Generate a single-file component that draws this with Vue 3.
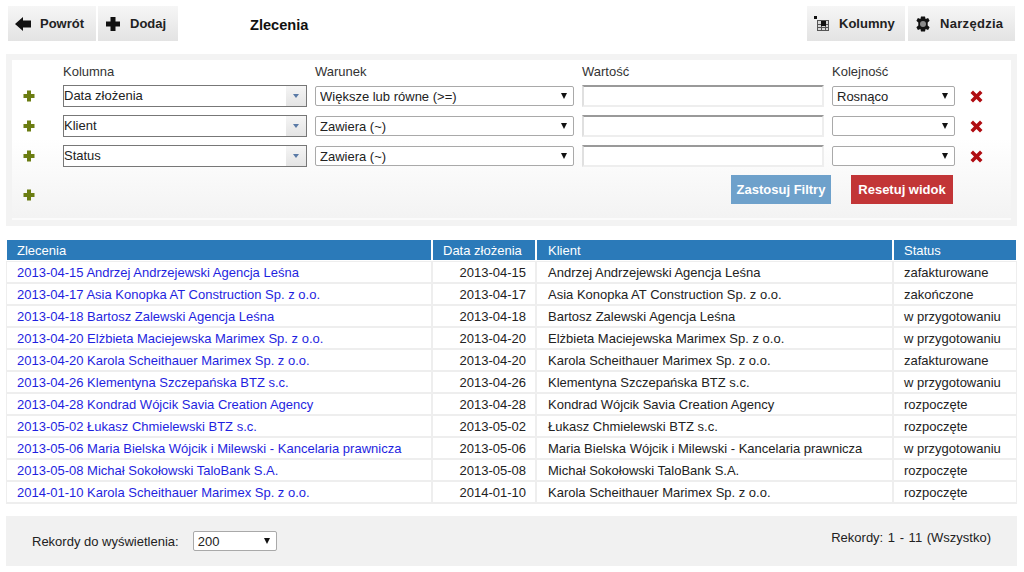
<template>
    <div class="page">
        <div class="toolbar">
            <button class="tool-btn btn-back">
                <svg width="16" height="16" viewBox="0 0 16 16"><path d="M0 8 L8 1 V4.5 H16 V11.5 H8 V15 Z" fill="#111" /></svg>
                <span>Powrót</span>
            </button>
            <button class="tool-btn btn-add">
                <svg width="16" height="16" viewBox="0 0 16 16"><path d="M5.5 1 H10.5 V5.5 H15 V10.5 H10.5 V15 H5.5 V10.5 H1 V5.5 H5.5 Z" fill="#111" /></svg>
                <span>Dodaj</span>
            </button>
            <h1 class="title">Zlecenia</h1>
            <div class="toolbar-right">
                <button class="tool-btn btn-cols">
                    <svg width="16" height="16" viewBox="0 0 16 16">
                        <rect x="3" y="4" width="12" height="11" fill="#d8d8d8" />
                        <path d="M3 4.5 H15 M3 8.5 H15 M3 11.5 H15 M3 14.5 H15 M3.5 4 V15 M7.5 4 V15 M11.5 4 V15 M14.5 4 V15" stroke="#555" stroke-width="1" fill="none" />
                        <rect x="0" y="0" width="3" height="3" fill="#111" />
                        <rect x="7" y="5" width="5" height="5" fill="#111" />
                    </svg>
                    <span>Kolumny</span>
                </button>
                <button class="tool-btn btn-tools">
                    <svg width="16" height="16" viewBox="0 0 16 16">
                        <path d="M6 0.5 H10 L10.6 3 L13.1 1.9 L14.6 4.8 L12.7 6.4 V9.6 L14.6 11.2 L13.1 14.1 L10.6 13 L10 15.5 H6 L5.4 13 L2.9 14.1 L1.4 11.2 L3.3 9.6 V6.4 L1.4 4.8 L2.9 1.9 L5.4 3 Z" fill="#111" />
                        <circle cx="8" cy="8" r="3" fill="#8a8a8a" />
                    </svg>
                    <span>Narzędzia</span>
                </button>
            </div>
        </div>

        <div class="filter-panel">
            <div class="filter-inner">
                <div class="filter-grid labels">
                    <span></span>
                    <label>Kolumna</label>
                    <label>Warunek</label>
                    <label>Wartość</label>
                    <label>Kolejność</label>
                    <span></span>
                </div>
                <div v-for="row in filters" :key="row.column" class="filter-grid filter-row">
                    <svg class="plus" width="12" height="12" viewBox="0 0 12 12"><path :d="plusPath" fill="#6b7d12" /></svg>
                    <div class="combo">
                        <input class="combo-input" :value="row.column" />
                        <span class="combo-btn"><i></i></span>
                    </div>
                    <div class="select-wrap cond">
                        <select>
                            <option>{{ row.condition }}</option>
                        </select>
                    </div>
                    <input class="value-input" />
                    <div class="select-wrap order">
                        <select>
                            <option>{{ row.order }}</option>
                        </select>
                    </div>
                    <svg class="remove" width="13" height="13" viewBox="0 0 13 13"><path d="M3 0.5 L6.5 4 L10 0.5 L12.5 3 L9 6.5 L12.5 10 L10 12.5 L6.5 9 L3 12.5 L0.5 10 L4 6.5 L0.5 3 Z" fill="#b00d12" /></svg>
                </div>
                <div class="filter-actions">
                    <svg class="plus" width="12" height="12" viewBox="0 0 12 12"><path :d="plusPath" fill="#6b7d12" /></svg>
                    <button class="btn-apply">Zastosuj Filtry</button>
                    <button class="btn-reset">Resetuj widok</button>
                </div>
            </div>
        </div>

        <table class="orders">
            <colgroup>
                <col style="width: 427px" />
                <col style="width: 104px" />
                <col style="width: 357px" />
                <col style="width: 123px" />
            </colgroup>
            <thead>
                <tr>
                    <th>Zlecenia</th>
                    <th>Data złożenia</th>
                    <th>Klient</th>
                    <th>Status</th>
                </tr>
            </thead>
            <tbody>
                <tr v-for="o in orders" :key="o.date + o.client">
                    <td><a href="#">{{ o.date }} {{ o.client }}</a></td>
                    <td class="date">{{ o.date }}</td>
                    <td>{{ o.client }}</td>
                    <td>{{ o.status }}</td>
                </tr>
            </tbody>
        </table>

        <div class="pager">
            <div class="pager-left">
                <span>Rekordy do wyświetlenia:</span>
                <div class="select-wrap size">
                    <select>
                        <option>200</option>
                    </select>
                </div>
            </div>
            <div class="pager-right">Rekordy: 1 - 11 (Wszystko)</div>
        </div>
    </div>
</template>

<script setup>
const plusPath = 'M4 0.5 H8 V4 H11.5 V8 H8 V11.5 H4 V8 H0.5 V4 H4 Z';

const filters = [
    { column: 'Data złożenia', condition: 'Większe lub równe (>=)', order: 'Rosnąco' },
    { column: 'Klient', condition: 'Zawiera (~)', order: '' },
    { column: 'Status', condition: 'Zawiera (~)', order: '' }
];

const orders = [
    { date: '2013-04-15', client: 'Andrzej Andrzejewski Agencja Leśna', status: 'zafakturowane' },
    { date: '2013-04-17', client: 'Asia Konopka AT Construction Sp. z o.o.', status: 'zakończone' },
    { date: '2013-04-18', client: 'Bartosz Zalewski Agencja Leśna', status: 'w przygotowaniu' },
    { date: '2013-04-20', client: 'Elżbieta Maciejewska Marimex Sp. z o.o.', status: 'w przygotowaniu' },
    { date: '2013-04-20', client: 'Karola Scheithauer Marimex Sp. z o.o.', status: 'zafakturowane' },
    { date: '2013-04-26', client: 'Klementyna Szczepańska BTZ s.c.', status: 'w przygotowaniu' },
    { date: '2013-04-28', client: 'Kondrad Wójcik Savia Creation Agency', status: 'rozpoczęte' },
    { date: '2013-05-02', client: 'Łukasz Chmielewski BTZ s.c.', status: 'rozpoczęte' },
    { date: '2013-05-06', client: 'Maria Bielska Wójcik i Milewski - Kancelaria prawnicza', status: 'w przygotowaniu' },
    { date: '2013-05-08', client: 'Michał Sokołowski TaloBank S.A.', status: 'rozpoczęte' },
    { date: '2014-01-10', client: 'Karola Scheithauer Marimex Sp. z o.o.', status: 'rozpoczęte' }
];
</script>

<style scoped>
.page {
    width: 1024px;
    height: 572px;
    overflow: hidden;
    background: #fff;
    font-family: "Liberation Sans", Arial, sans-serif;
    font-size: 13px;
    color: #222;
    box-sizing: border-box;
    padding-top: 6px;
}

.toolbar {
    display: flex;
    align-items: center;
    height: 35px;
    padding: 0 9px 0 8px;
}

.tool-btn {
    display: flex;
    align-items: center;
    height: 35px;
    border: none;
    padding: 0 0 0 7px;
    background: linear-gradient(#f6f6f6, #e3e3e3);
    font-family: inherit;
    font-size: 13px;
    font-weight: bold;
    color: #222;
    box-sizing: border-box;
}

.btn-back { width: 88px; gap: 9px; margin-right: 2px; }
.btn-add { width: 80px; gap: 9px; }
.btn-cols { width: 98px; gap: 9px; margin-right: 3px; }
.btn-tools { width: 107px; gap: 9px; letter-spacing: 0.3px; }

.title {
    margin: 2px 0 0 72px;
    font-size: 14.6px;
    font-weight: bold;
    color: #111;
}

.toolbar-right {
    margin-left: auto;
    display: flex;
}

.filter-panel {
    margin: 13px 7px 0 6px;
    height: 172px;
    box-sizing: border-box;
    background: #f3f3f3;
    padding: 6px;
}

.filter-inner {
    height: 158px;
    background: linear-gradient(#fff 50%, #f3f3f3);
    border-bottom: 2px solid #fbfbfb;
}

.filter-grid {
    display: grid;
    grid-template-columns: 51px 252px 267px 250px 138px 1fr;
    align-items: center;
}

.labels {
    height: 21px;
    box-sizing: border-box;
    padding-top: 2px;
    color: #333;
}

.filter-row {
    height: 30px;
}

.plus {
    margin-left: 11px;
}

.combo {
    position: relative;
    width: 244px;
    height: 22px;
}

.combo-input {
    width: 100%;
    height: 100%;
    box-sizing: border-box;
    border: 1px solid #777;
    padding: 0 22px 2px 0;
    font-family: inherit;
    font-size: 13px;
    color: #222;
    outline: none;
}

.combo-btn {
    position: absolute;
    top: 1px;
    right: 1px;
    width: 20px;
    height: 20px;
    background: linear-gradient(#f5f5f5, #e4e4e4);
    display: flex;
    align-items: center;
    justify-content: center;
}

.combo-btn i {
    display: block;
    width: 0;
    height: 0;
    border-left: 3px solid transparent;
    border-right: 3px solid transparent;
    border-top: 4px solid #5a7aa6;
}

.select-wrap {
    position: relative;
    height: 20px;
}

.select-wrap::after {
    content: "";
    position: absolute;
    top: 7px;
    right: 7px;
    width: 0;
    height: 0;
    border-left: 3.5px solid transparent;
    border-right: 3.5px solid transparent;
    border-top: 6px solid #111;
    pointer-events: none;
}

.select-wrap select {
    display: block;
    width: 100%;
    height: 100%;
    appearance: none;
    background: #fff;
    border: 1px solid #a9a9a9;
    border-radius: 2px;
    padding: 0 0 0 4px;
    font-family: inherit;
    font-size: 13px;
    color: #222;
}

.cond { width: 259px; }
.order { width: 123px; }
.size { width: 84px; }

.value-input {
    width: 242px;
    height: 22px;
    box-sizing: border-box;
    border-style: solid;
    border-width: 2px;
    border-color: #999 #eee #eee #e0e0e0;
    background: #fff;
    padding: 0;
    outline: none;
}

.filter-actions {
    height: 47px;
    display: flex;
    align-items: flex-start;
}

.filter-actions .plus {
    margin-top: 18px;
    margin-right: 696px;
}

.filter-actions button {
    height: 29px;
    border: none;
    font-family: inherit;
    font-size: 13px;
    font-weight: bold;
    color: #fff;
    padding: 0;
    margin-top: 4px;
}

.btn-apply {
    width: 100px;
    background: #6ea1cb;
    margin-right: 20px;
}

.btn-reset {
    width: 102px;
    background: #c23537;
}

.orders {
    margin: 14px 0 0 6px;
    width: 1011px;
    table-layout: fixed;
    border-collapse: separate;
    border-spacing: 0;
}

.orders th,
.orders td {
    padding: 0 0 0 10px;
    box-sizing: border-box;
    text-align: left;
    font-weight: normal;
    white-space: nowrap;
    overflow: hidden;
    border-style: solid;
    border-width: 0 2px 2px 0;
}

.orders th {
    height: 21px;
    background: #2b7ab9;
    background-clip: padding-box;
    color: #fff;
    border-color: #fff;
    border-bottom-width: 1px;
}

.orders td {
    height: 22px;
    border-color: #eee;
}

.orders tbody tr:first-child td {
    height: 23px;
    border-top-width: 1px;
}

.orders th:first-child,
.orders td:first-child {
    border-left-width: 1px;
}

.orders th:last-child,
.orders td:last-child {
    border-right-width: 1px;
}

.orders td:nth-child(3),
.orders th:nth-child(3) {
    padding-left: 11px;
}

.orders td.date {
    text-align: right;
    padding: 0 9px 0 0;
}

.orders a {
    color: #1f1fe0;
    text-decoration: none;
}

.pager {
    margin: 12px 7px 0 6px;
    height: 50px;
    background: #f1f1f1;
    display: flex;
    justify-content: space-between;
    align-items: flex-start;
    padding: 0 26px;
}

.pager-left {
    display: flex;
    align-items: center;
    gap: 14px;
    margin-top: 15px;
}

.pager-right {
    margin-top: 14px;
    word-spacing: 1px;
}
</style>

<style>
body {
    margin: 0;
    background: #fff;
}
</style>
